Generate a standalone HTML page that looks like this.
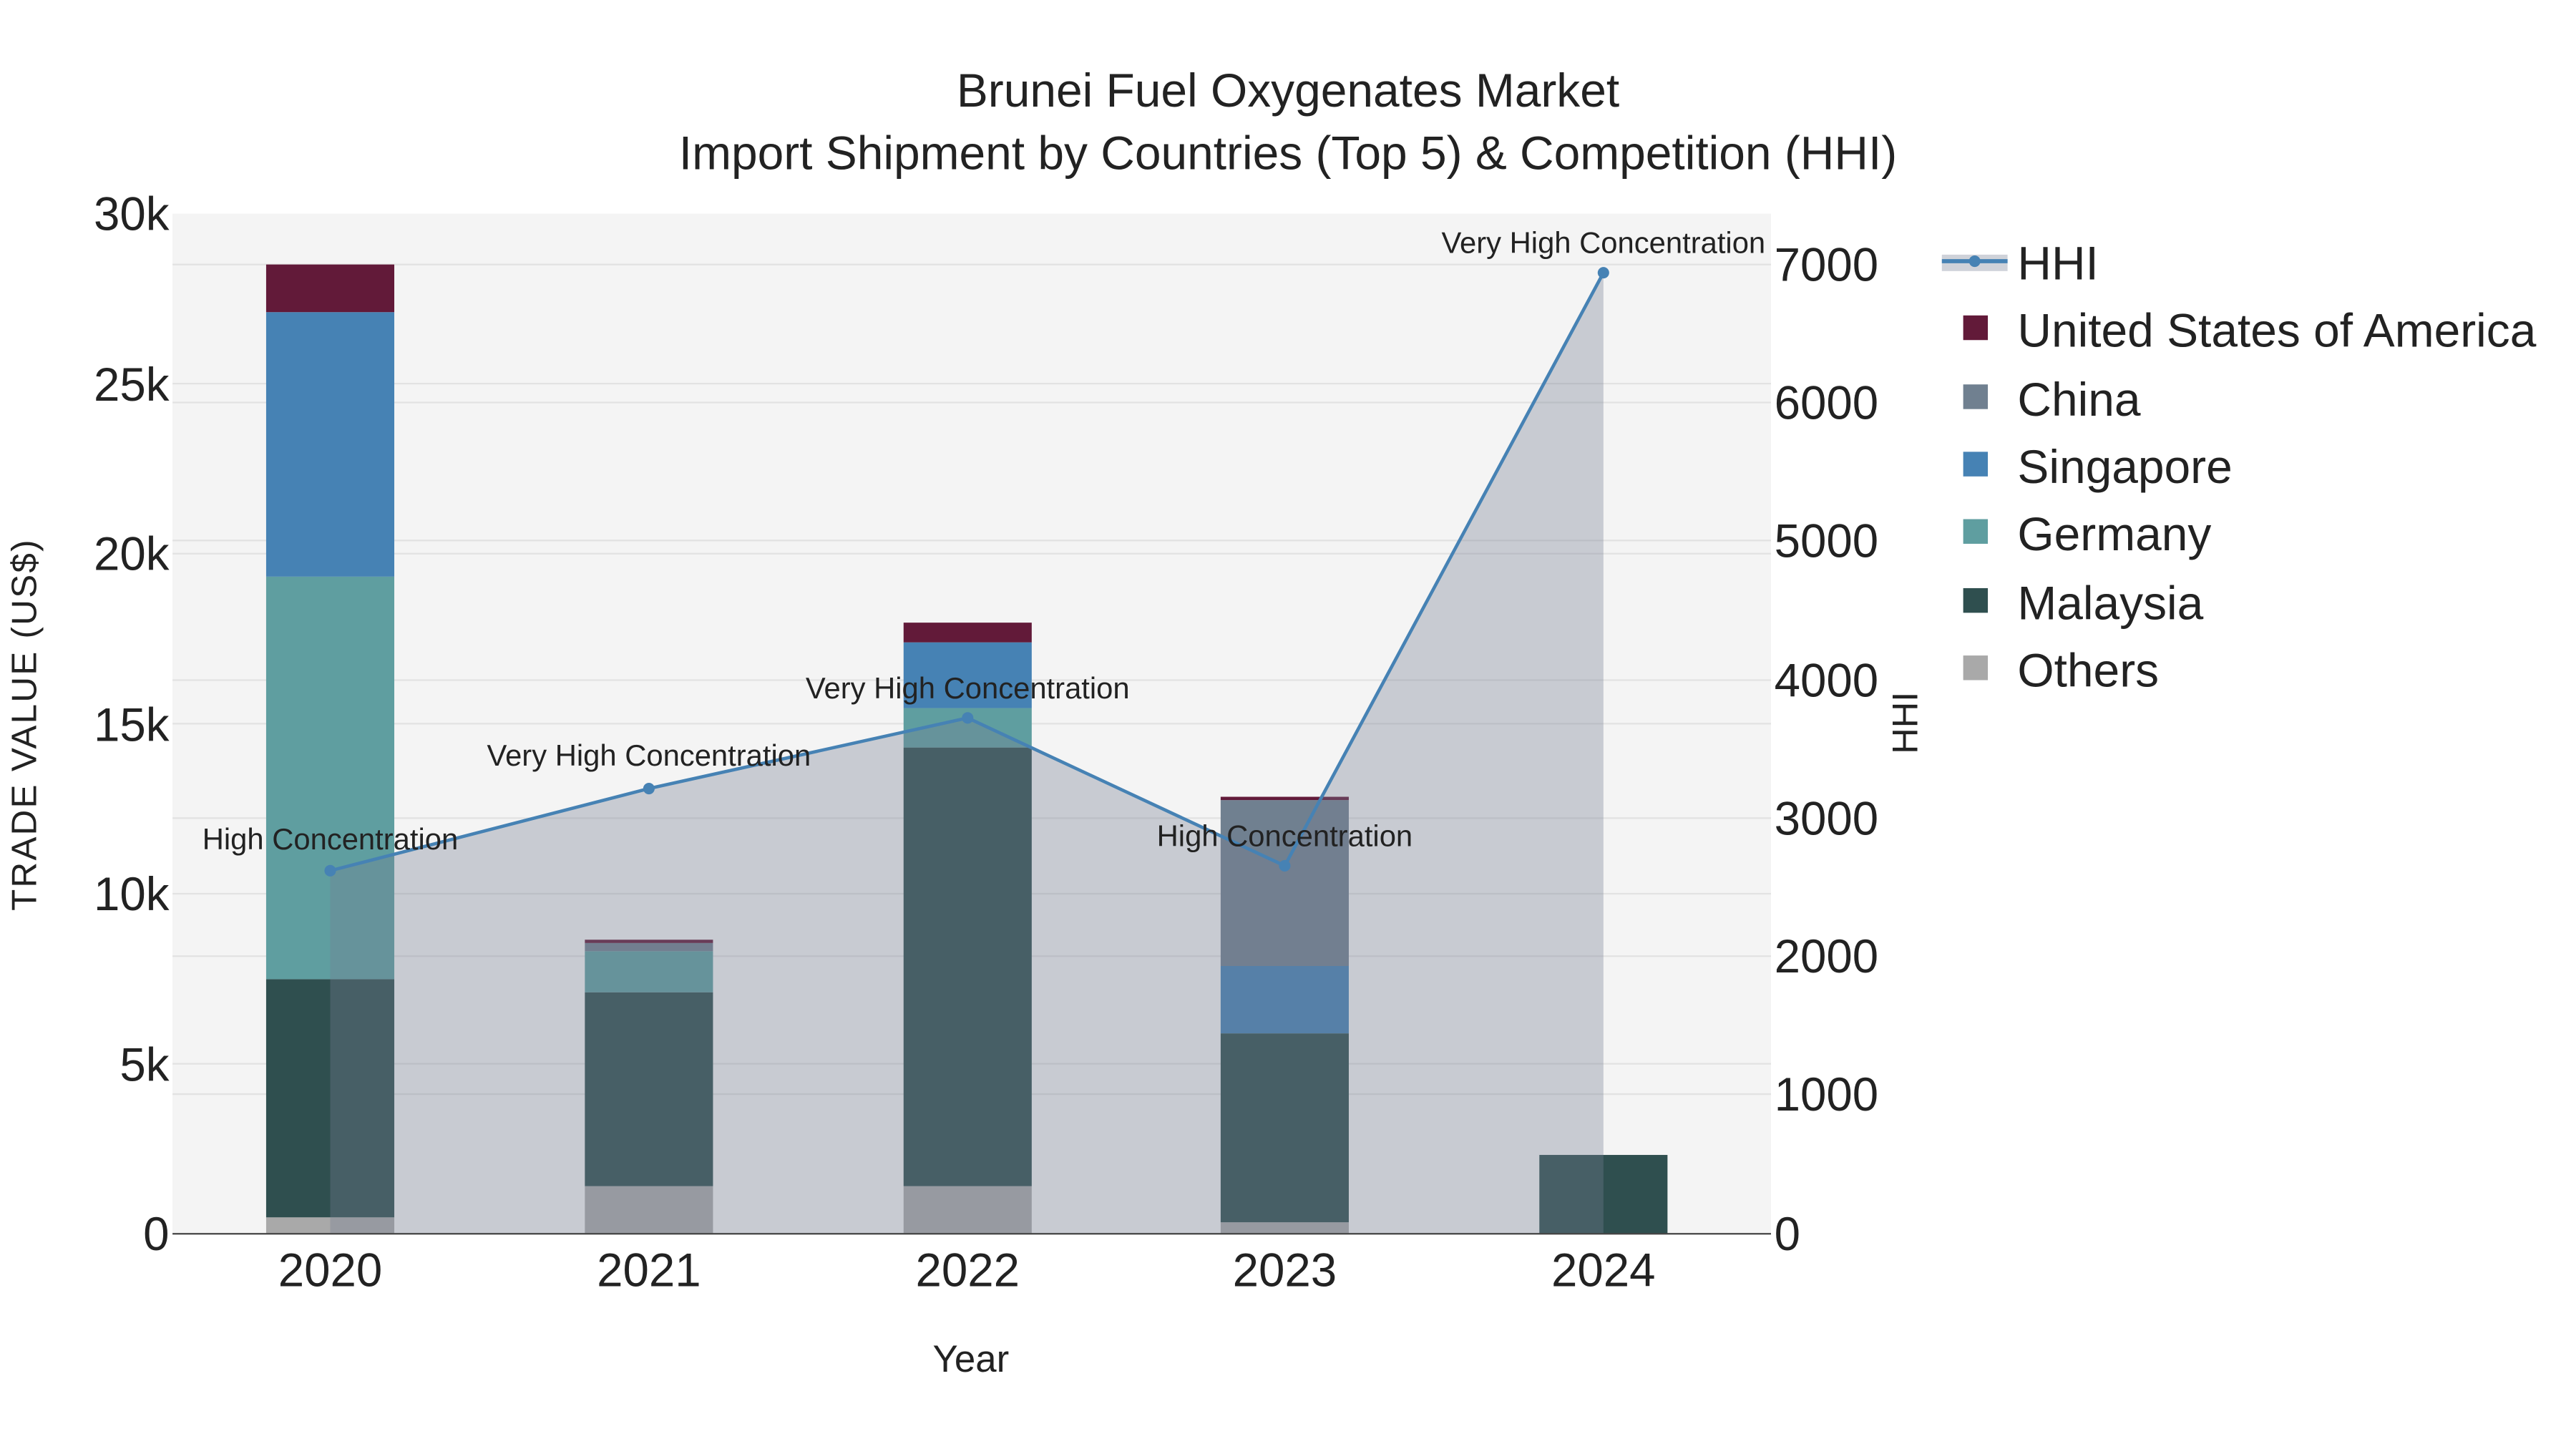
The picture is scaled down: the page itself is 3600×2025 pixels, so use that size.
<!DOCTYPE html>
<html><head><meta charset="utf-8"><style>
html,body{margin:0;padding:0;background:#fff;}
svg{display:block;}
text{font-family:"Liberation Sans",sans-serif;fill:#222;}
</style></head><body>
<svg width="3600" height="2025" viewBox="0 0 1568 882" preserveAspectRatio="none" xmlns="http://www.w3.org/2000/svg">
<rect x="0" y="0" width="1568" height="882" fill="#fff"/>
<rect x="105" y="130" width="973" height="621" fill="#f4f4f4"/>
<g stroke="#e2e2e2" stroke-width="1">
<line x1="105" x2="1078" y1="647.5" y2="647.5"/><line x1="105" x2="1078" y1="544" y2="544"/>
<line x1="105" x2="1078" y1="440.5" y2="440.5"/><line x1="105" x2="1078" y1="337" y2="337"/>
<line x1="105" x2="1078" y1="233.5" y2="233.5"/>
<line x1="105" x2="1078" y1="666" y2="666"/><line x1="105" x2="1078" y1="582" y2="582"/>
<line x1="105" x2="1078" y1="498" y2="498"/><line x1="105" x2="1078" y1="414" y2="414"/>
<line x1="105" x2="1078" y1="329" y2="329"/><line x1="105" x2="1078" y1="245" y2="245"/>
<line x1="105" x2="1078" y1="161" y2="161"/>
</g>
<rect x="162" y="741" width="78" height="10" fill="#a9a9a9"/>
<rect x="162" y="596" width="78" height="145" fill="#2f4f4f"/>
<rect x="162" y="351" width="78" height="245" fill="#5f9ea0"/>
<rect x="162" y="190" width="78" height="161" fill="#4682b4"/>
<rect x="162" y="161" width="78" height="29" fill="#621a39"/>
<rect x="356" y="722" width="78" height="29" fill="#a9a9a9"/>
<rect x="356" y="604" width="78" height="118" fill="#2f4f4f"/>
<rect x="356" y="579" width="78" height="25" fill="#5f9ea0"/>
<rect x="356" y="574" width="78" height="5" fill="#708090"/>
<rect x="356" y="572" width="78" height="2" fill="#621a39"/>
<rect x="550" y="722" width="78" height="29" fill="#a9a9a9"/>
<rect x="550" y="455" width="78" height="267" fill="#2f4f4f"/>
<rect x="550" y="431" width="78" height="24" fill="#5f9ea0"/>
<rect x="550" y="391" width="78" height="40" fill="#4682b4"/>
<rect x="550" y="379" width="78" height="12" fill="#621a39"/>
<rect x="743" y="744" width="78" height="7" fill="#a9a9a9"/>
<rect x="743" y="629" width="78" height="115" fill="#2f4f4f"/>
<rect x="743" y="588" width="78" height="41" fill="#4682b4"/>
<rect x="743" y="487" width="78" height="101" fill="#708090"/>
<rect x="743" y="485" width="78" height="2" fill="#621a39"/>
<rect x="937" y="703" width="78" height="48" fill="#2f4f4f"/>
<polygon points="201,530 395,480 589,437 782,527 976,166 976,751 201,751" fill="rgba(118,127,147,0.35)"/>
<polyline points="201,530 395,480 589,437 782,527 976,166" fill="none" stroke="#4682b4" stroke-width="2"/>
<g fill="#4682b4"><circle cx="201" cy="530" r="3.5"/><circle cx="395" cy="480" r="3.5"/><circle cx="589" cy="437" r="3.5"/><circle cx="782" cy="527" r="3.5"/><circle cx="976" cy="166" r="3.5"/></g>
<line x1="105" x2="1078" y1="751" y2="751" stroke="#444" stroke-width="1"/>
<g font-size="18.2" text-anchor="middle">
<text x="201" y="517">High Concentration</text>
<text x="395" y="466">Very High Concentration</text>
<text x="589" y="425">Very High Concentration</text>
<text x="782" y="515">High Concentration</text>
<text x="976" y="154">Very High Concentration</text>
</g>
<g font-size="28.7" text-anchor="middle">
<text x="784" y="65">Brunei Fuel Oxygenates Market</text>
<text x="784" y="103">Import Shipment by Countries (Top 5) &amp; Competition (HHI)</text>
</g>
<g font-size="28.5" text-anchor="end">
<text x="103" y="761">0</text><text x="103" y="658">5k</text><text x="103" y="554">10k</text>
<text x="103" y="451">15k</text><text x="103" y="347">20k</text><text x="103" y="244">25k</text><text x="103" y="140">30k</text>
</g>
<g font-size="28.5" text-anchor="start">
<text x="1080" y="761">0</text><text x="1080" y="676">1000</text><text x="1080" y="592">2000</text>
<text x="1080" y="508">3000</text><text x="1080" y="424">4000</text><text x="1080" y="339">5000</text>
<text x="1080" y="255">6000</text><text x="1080" y="171">7000</text>
</g>
<g font-size="28.5" text-anchor="middle">
<text x="201" y="783">2020</text><text x="395" y="783">2021</text><text x="589" y="783">2022</text>
<text x="782" y="783">2023</text><text x="976" y="783">2024</text>
</g>
<text x="591" y="835" font-size="23" text-anchor="middle">Year</text>
<text transform="translate(22,441) rotate(-90)" font-size="21.5" text-anchor="middle" letter-spacing="1">TRADE VALUE (US$)</text>
<text transform="translate(1167,440) rotate(-90)" font-size="22" text-anchor="middle">HHI</text>
<rect x="1182" y="155" width="40" height="10" fill="rgba(118,127,147,0.35)"/>
<line x1="1182" x2="1222" y1="159" y2="159" stroke="#4682b4" stroke-width="2.5"/>
<circle cx="1202" cy="159" r="3.5" fill="#4682b4"/>
<rect x="1195" y="192" width="15" height="15" fill="#621a39"/>
<rect x="1195" y="234" width="15" height="15" fill="#708090"/>
<rect x="1195" y="275" width="15" height="15" fill="#4682b4"/>
<rect x="1195" y="316" width="15" height="15" fill="#5f9ea0"/>
<rect x="1195" y="358" width="15" height="15" fill="#2f4f4f"/>
<rect x="1195" y="399" width="15" height="15" fill="#a9a9a9"/>
<g font-size="28.7">
<text x="1228" y="170">HHI</text>
<text x="1228" y="211">United States of America</text>
<text x="1228" y="253">China</text>
<text x="1228" y="294">Singapore</text>
<text x="1228" y="335">Germany</text>
<text x="1228" y="377">Malaysia</text>
<text x="1228" y="418">Others</text>
</g>
</svg>
</body></html>
